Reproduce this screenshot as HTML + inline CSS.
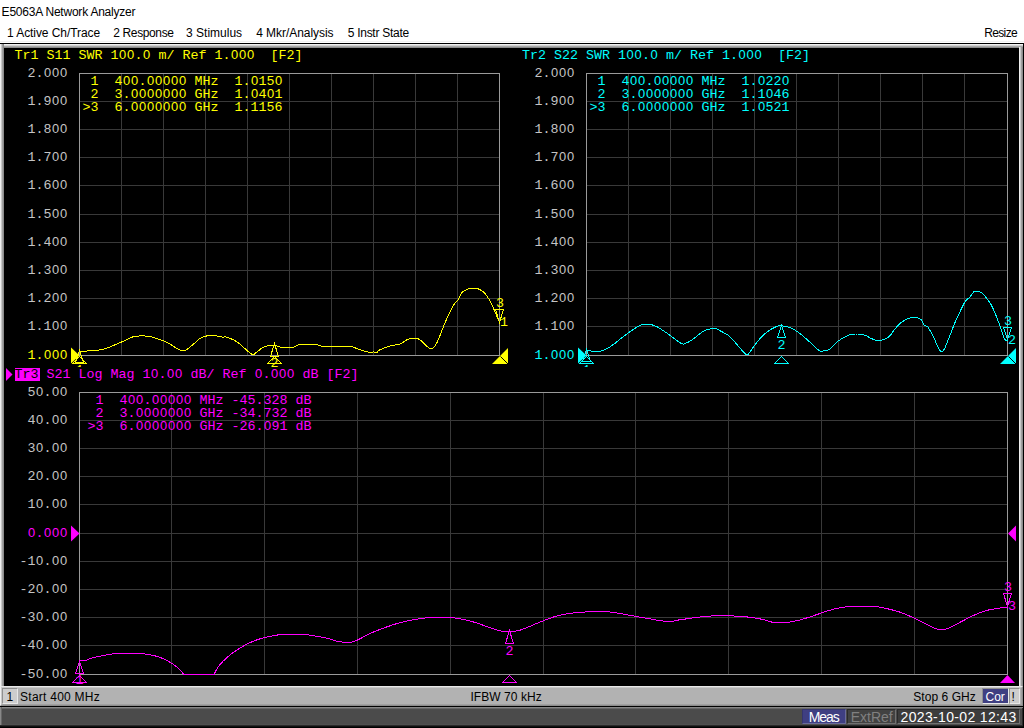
<!DOCTYPE html>
<html lang="en">
<head>
<meta charset="utf-8">
<title>E5063A Network Analyzer</title>
<style>
html,body{margin:0;padding:0;}
body{width:1024px;height:728px;overflow:hidden;background:#fff;position:relative;font-family:"Liberation Sans","DejaVu Sans",sans-serif;color:#000;}
.abs{position:absolute;}
.t{position:absolute;white-space:pre;font-size:12px;}
#titlebar{left:0;top:0;width:1024px;height:22px;background:#fff;}
#menubar{left:0;top:22px;width:1024px;height:21px;background:linear-gradient(#fff 0,#fff 19px,#f2f2f2 19px,#f2f2f2 20px,#fff 20px);}
#edge{left:0;top:43px;width:1024px;height:685px;background:#000;}
#frame{left:0;top:44px;width:1023px;height:642px;background:#000;box-sizing:border-box;}
#frame i{position:absolute;display:block;}
#frame .ft{left:0;top:0;width:1023px;height:4px;background:linear-gradient(#f0f0f0 0,#f0f0f0 1px,#d0d0d0 1px,#d0d0d0 2px,#a8a8a8 2px,#a8a8a8 3px,#8c8c8c 3px,#8c8c8c 4px);}
#frame .fl{left:0;top:0;width:4px;height:642px;background:linear-gradient(90deg,#f0f0f0 0,#f0f0f0 1px,#c8c8c8 1px,#c8c8c8 2px,#a0a0a0 2px,#a0a0a0 3px,#8c8c8c 3px,#8c8c8c 4px);}
#frame .fr{left:1019px;top:3px;width:4px;height:639px;background:linear-gradient(90deg,#f0f0f0 0,#f0f0f0 1px,#c8c8c8 1px,#c8c8c8 2px,#a0a0a0 2px,#a0a0a0 3px,#8c8c8c 3px,#8c8c8c 4px);}
#statusbar{left:0;top:686px;width:1023px;height:20px;background:#b2b2b2;box-sizing:border-box;border-style:solid;border-width:1px;border-color:#e8e8e8 #8c8c8c #8c8c8c #f0f0f0;}
#statusbar .in{position:absolute;left:0;top:0;width:1021px;height:18px;box-sizing:border-box;border-style:solid;border-width:1px;border-color:#c8c8c8 #a0a0a0 #a0a0a0 #c8c8c8;}
#statusbar .box{position:absolute;top:1px;height:16px;box-sizing:border-box;border:1px solid;border-color:#909090 #e8e8e8 #e8e8e8 #909090;background:#cdcdcd;}
#statusbar .t{top:3px;}
#bottombar{left:0;top:707px;width:1023px;height:21px;background:linear-gradient(#868686 0,#868686 1px,#666 1px,#666 2px,#4b4b4b 2px,#4b4b4b 17px,#4f4f4f 17px,#4f4f4f 18px,#2a2a2a 18px,#2a2a2a 19px,#101010 19px,#101010 20px,#000 20px);}
#bottombar .le{position:absolute;left:0;top:0;width:2px;height:18px;background:linear-gradient(90deg,#888 0,#888 1px,#666 1px,#666 2px);}
#bottombar .re{position:absolute;left:1022px;top:1px;width:1px;height:18px;background:#2a2a2a;}
#bottombar .box{position:absolute;top:2px;height:15px;box-sizing:border-box;border:1px solid;border-color:#2a2a2a #707070 #707070 #2a2a2a;}
#bottombar .t{top:2px;font-size:14px;}
#screen text{white-space:pre;}
#screen .z{font-family:"Liberation Sans","DejaVu Sans",sans-serif;font-size:12.9px;}
</style>
</head>
<body>
<div id="titlebar" class="abs"><span class="t" style="left:1.6px;top:5px;letter-spacing:-0.218px">E5063A Network Analyzer</span></div>
<div id="menubar" class="abs">
<span class="t" style="left:7px;top:4px;letter-spacing:-0.069px">1 Active Ch/Trace</span>
<span class="t" style="left:113.3px;top:4px;letter-spacing:-0.378px">2 Response</span>
<span class="t" style="left:186px;top:4px;letter-spacing:0.011px">3 Stimulus</span>
<span class="t" style="left:256.2px;top:4px;letter-spacing:-0.054px">4 Mkr/Analysis</span>
<span class="t" style="left:347.7px;top:4px;letter-spacing:-0.267px">5 Instr State</span>
<span class="t" style="left:984.2px;top:4px;letter-spacing:-0.64px">Resize</span>
</div>
<div id="edge" class="abs"></div>
<div id="frame" class="abs"><i class="ft"></i><i class="fl"></i><i class="fr"></i></div>
<svg id="screen" width="1024" height="728" viewBox="0 0 1024 728" font-family="'Liberation Mono', 'DejaVu Sans Mono', monospace" font-size="13.33" style="position:absolute;left:0;top:0;white-space:pre">
<rect x="4" y="48" width="1015" height="638" fill="#000"/>
<defs><clipPath id="c1"><rect x="4" y="48" width="1015" height="319"/></clipPath></defs>
<g id="trace1">
<path d="M121.5 73.5V355.5M163.5 73.5V355.5M205.5 73.5V355.5M247.5 73.5V355.5M289.5 73.5V355.5M331.5 73.5V355.5M373.5 73.5V355.5M415.5 73.5V355.5M457.5 73.5V355.5M79.5 101.5H499.5M79.5 129.5H499.5M79.5 157.5H499.5M79.5 185.5H499.5M79.5 214.5H499.5M79.5 242.5H499.5M79.5 270.5H499.5M79.5 298.5H499.5M79.5 326.5H499.5" stroke="#393939" stroke-width="1" fill="none" shape-rendering="crispEdges"/>
<rect x="79.5" y="73.5" width="420" height="282" stroke="#9a9a9a" stroke-width="1" fill="none" shape-rendering="crispEdges"/>
<text xml:space="preserve" x="14.5 22.5 30.5 38.5 46.5 54.5 62.5 70.5 78.5 86.5 94.5 102.5 110.5 118.91 126.91 134.5 142.91 150.5 158.5 166.5 174.5 182.5 190.5 198.5 206.5 214.5 222.5 230.91 238.91 246.91 254.5 262.5 270.5 278.5 286.5 294.5" y="59.00" fill="#ffff00" >Tr1 S11 SWR 1<tspan class="z">00</tspan>.<tspan class="z">0</tspan> m/ Ref 1.<tspan class="z">000</tspan>  [F2]</text>
<text xml:space="preserve" x="27.5 35.5 43.91 51.91 59.91" y="77.00" fill="#c4c4c4" >2.<tspan class="z">000</tspan></text>
<text xml:space="preserve" x="27.5 35.5 43.5 51.91 59.91" y="105.00" fill="#c4c4c4" >1.9<tspan class="z">00</tspan></text>
<text xml:space="preserve" x="27.5 35.5 43.5 51.91 59.91" y="133.00" fill="#c4c4c4" >1.8<tspan class="z">00</tspan></text>
<text xml:space="preserve" x="27.5 35.5 43.5 51.91 59.91" y="161.00" fill="#c4c4c4" >1.7<tspan class="z">00</tspan></text>
<text xml:space="preserve" x="27.5 35.5 43.5 51.91 59.91" y="189.00" fill="#c4c4c4" >1.6<tspan class="z">00</tspan></text>
<text xml:space="preserve" x="27.5 35.5 43.5 51.91 59.91" y="218.00" fill="#c4c4c4" >1.5<tspan class="z">00</tspan></text>
<text xml:space="preserve" x="27.5 35.5 43.5 51.91 59.91" y="246.00" fill="#c4c4c4" >1.4<tspan class="z">00</tspan></text>
<text xml:space="preserve" x="27.5 35.5 43.5 51.91 59.91" y="274.00" fill="#c4c4c4" >1.3<tspan class="z">00</tspan></text>
<text xml:space="preserve" x="27.5 35.5 43.5 51.91 59.91" y="302.00" fill="#c4c4c4" >1.2<tspan class="z">00</tspan></text>
<text xml:space="preserve" x="27.5 35.5 43.5 51.91 59.91" y="330.00" fill="#c4c4c4" >1.1<tspan class="z">00</tspan></text>
<text xml:space="preserve" x="27.5 35.5 43.91 51.91 59.91" y="359.00" fill="#ffff00" >1.<tspan class="z">000</tspan></text>
<text xml:space="preserve" x="82.5 90.5 98.5 106.5 114.5 122.91 130.91 138.5 146.91 154.91 162.91 170.91 178.91 186.5 194.5 202.5 210.5 218.5 226.5 234.5 242.5 250.91 258.5 266.5 274.91" y="85.00" fill="#ffff00" > 1  4<tspan class="z">00</tspan>.<tspan class="z">00000</tspan> MHz  1.<tspan class="z">0</tspan>15<tspan class="z">0</tspan></text>
<text xml:space="preserve" x="82.5 90.5 98.5 106.5 114.5 122.5 130.91 138.91 146.91 154.91 162.91 170.91 178.91 186.5 194.5 202.5 210.5 218.5 226.5 234.5 242.5 250.91 258.5 266.91 274.5" y="98.00" fill="#ffff00" > 2  3.<tspan class="z">0000000</tspan> GHz  1.<tspan class="z">0</tspan>4<tspan class="z">0</tspan>1</text>
<text xml:space="preserve" x="82.5 90.5 98.5 106.5 114.5 122.5 130.91 138.91 146.91 154.91 162.91 170.91 178.91 186.5 194.5 202.5 210.5 218.5 226.5 234.5 242.5 250.5 258.5 266.5 274.5" y="111.00" fill="#ffff00" >&gt;3  6.<tspan class="z">0000000</tspan> GHz  1.1156</text>
<polyline points="79.5,351.4 80.8,351.3 82.7,351.3 84.9,351.2 87.3,351.0 89.5,350.9 91.3,350.8 93.2,350.6 95.1,350.5 97.0,350.3 98.8,350.1 100.5,349.8 102.5,349.4 104.3,348.9 106.0,348.3 108.3,347.5 109.9,346.9 111.7,346.2 113.7,345.4 115.7,344.5 117.7,343.7 119.7,342.8 121.6,342.0 123.4,341.2 125.2,340.3 126.9,339.4 128.6,338.6 130.4,337.8 132.1,337.1 134.0,336.6 135.7,336.3 137.5,336.1 139.4,336.0 141.2,335.9 143.1,335.9 144.9,336.0 146.6,336.1 148.1,336.2 150.3,336.6 152.2,337.0 153.9,337.6 155.6,338.2 157.5,338.9 159.2,339.5 160.8,340.0 162.6,340.6 164.3,341.3 166.0,342.0 167.7,342.8 169.4,343.8 171.2,344.9 173.0,346.0 174.8,347.2 176.4,348.2 177.8,349.0 180.1,350.0 181.8,350.4 183.3,350.6 184.7,350.7 186.4,349.8 187.8,348.8 189.6,347.4 191.5,345.8 193.3,344.2 195.0,342.8 196.6,341.4 198.0,340.0 199.5,338.8 201.2,337.8 202.7,337.2 204.3,336.6 206.1,336.1 207.9,335.7 209.7,335.4 211.4,335.3 213.2,335.4 215.0,335.6 216.8,336.0 218.6,336.4 220.2,336.7 221.6,337.0 223.6,337.0 225.0,336.9 227.0,337.3 228.4,337.8 230.0,338.4 231.8,339.1 233.6,339.9 235.4,340.9 237.2,342.0 239.0,343.4 241.0,345.0 243.0,346.8 244.9,348.6 246.6,350.1 248.1,351.4 250.3,353.1 251.9,354.2 253.3,354.5 254.7,354.0 255.9,352.8 257.5,351.4 259.0,350.3 260.7,348.9 262.5,347.7 264.5,346.7 266.2,346.1 268.1,345.7 270.1,345.4 272.0,345.2 273.9,345.2 275.6,345.5 277.3,346.0 278.9,346.6 280.6,347.1 282.5,347.5 284.2,347.6 286.1,347.7 288.0,347.7 290.0,347.6 291.8,347.4 293.4,347.2 295.3,346.6 296.7,345.8 298.3,345.0 300.5,344.4 302.0,344.3 303.8,344.2 305.8,344.1 307.8,344.1 309.9,344.1 311.9,344.2 313.7,344.3 315.3,344.4 317.2,344.7 318.4,345.1 319.6,345.6 321.3,346.0 323.9,346.2 325.3,346.3 326.9,346.3 328.7,346.3 330.7,346.3 332.7,346.3 334.9,346.2 337.0,346.2 339.2,346.2 341.2,346.1 343.2,346.1 345.0,346.1 346.7,346.2 348.1,346.2 350.9,346.6 352.9,347.0 354.3,347.6 355.8,348.1 357.5,348.8 359.3,349.3 361.2,350.0 363.2,350.7 365.1,351.3 366.9,351.8 368.4,352.2 370.7,352.3 372.4,352.1 373.9,351.9 375.7,352.3 377.0,352.5 378.6,350.5 380.0,349.8 381.8,349.0 384.0,348.1 386.2,347.2 388.4,346.4 390.3,345.8 392.4,345.3 394.3,345.1 396.2,344.9 398.0,344.7 399.7,344.2 401.8,343.2 403.7,341.8 405.6,340.5 407.5,339.5 409.5,338.9 411.6,338.5 413.6,338.3 415.3,338.3 416.9,338.3 418.1,338.7 420.0,339.8 421.4,341.0 423.2,342.7 425.1,344.5 427.0,346.3 428.7,347.8 430.2,348.6 432.4,348.6 434.0,347.1 435.6,345.0 437.2,342.3 438.6,338.8 440.3,334.8 441.7,331.2 443.3,327.2 444.9,323.1 446.6,319.2 448.4,315.4 450.2,311.6 452.0,308.1 453.6,305.2 455.4,302.8 456.9,301.4 458.3,299.7 460.1,295.9 462.2,292.3 463.7,291.1 465.5,290.1 467.3,289.3 469.2,288.8 471.1,288.3 473.0,288.0 475.0,288.0 477.0,288.4 478.7,289.1 480.5,290.0 482.2,291.1 484.0,292.5 485.6,294.2 487.5,296.8 489.3,299.8 491.0,303.2 492.7,306.7 494.6,310.8 496.5,315.4 498.3,319.6 499.5,322.5" fill="none" stroke="#ffff00" stroke-width="1" shape-rendering="crispEdges"/>
<polygon points="71,347.5 79.5,355.5 71,363.5" fill="#ffff00"/>
<polygon points="492,364 508,348 508,364" fill="#ffff00"/>
<path d="M500.5 356.5L508 364" stroke="#000" stroke-width="1" fill="none"/>
<g fill="none" stroke="#ffff00" stroke-width="1" shape-rendering="crispEdges">
<path d="M79.5 350.5L75.5 362.5H83.5Z"/>
<path d="M79.5 356.5L72.5 363.5H86.5Z"/>
<path d="M274.5 343.5L270.5 356.5H278.5Z"/>
<path d="M274.5 356.5L267.5 363.5H281.5Z"/>
<path d="M495.5 309.5H503.5L499.5 322.5Z"/>
</g>
<g clip-path="url(#c1)">
<text xml:space="preserve" x="75.50" y="374.00" fill="#ffff00" >1</text>
</g>
<text xml:space="preserve" x="270.50" y="367.00" fill="#ffff00" >2</text>
<text xml:space="preserve" x="496.00" y="307.00" fill="#ffff00" >3</text>
<text xml:space="preserve" x="500.00" y="326.00" fill="#ffff00" >1</text>
</g>
<g id="trace2">
<path d="M628.5 73.5V355.5M670.5 73.5V355.5M712.5 73.5V355.5M754.5 73.5V355.5M796.5 73.5V355.5M838.5 73.5V355.5M880.5 73.5V355.5M922.5 73.5V355.5M964.5 73.5V355.5M586.5 101.5H1007.5M586.5 129.5H1007.5M586.5 157.5H1007.5M586.5 185.5H1007.5M586.5 214.5H1007.5M586.5 242.5H1007.5M586.5 270.5H1007.5M586.5 298.5H1007.5M586.5 326.5H1007.5" stroke="#393939" stroke-width="1" fill="none" shape-rendering="crispEdges"/>
<rect x="586.5" y="73.5" width="421" height="282" stroke="#9a9a9a" stroke-width="1" fill="none" shape-rendering="crispEdges"/>
<text xml:space="preserve" x="522 530 538 546 554 562 570 578 586 594 602 610 618 626.41 634.41 642 650.41 658 666 674 682 690 698 706 714 722 730 738.41 746.41 754.41 762 770 778 786 794 802" y="59.00" fill="#00ffff" >Tr2 S22 SWR 1<tspan class="z">00</tspan>.<tspan class="z">0</tspan> m/ Ref 1.<tspan class="z">000</tspan>  [F2]</text>
<text xml:space="preserve" x="534.5 542.5 550.91 558.91 566.91" y="77.00" fill="#c4c4c4" >2.<tspan class="z">000</tspan></text>
<text xml:space="preserve" x="534.5 542.5 550.5 558.91 566.91" y="105.00" fill="#c4c4c4" >1.9<tspan class="z">00</tspan></text>
<text xml:space="preserve" x="534.5 542.5 550.5 558.91 566.91" y="133.00" fill="#c4c4c4" >1.8<tspan class="z">00</tspan></text>
<text xml:space="preserve" x="534.5 542.5 550.5 558.91 566.91" y="161.00" fill="#c4c4c4" >1.7<tspan class="z">00</tspan></text>
<text xml:space="preserve" x="534.5 542.5 550.5 558.91 566.91" y="189.00" fill="#c4c4c4" >1.6<tspan class="z">00</tspan></text>
<text xml:space="preserve" x="534.5 542.5 550.5 558.91 566.91" y="218.00" fill="#c4c4c4" >1.5<tspan class="z">00</tspan></text>
<text xml:space="preserve" x="534.5 542.5 550.5 558.91 566.91" y="246.00" fill="#c4c4c4" >1.4<tspan class="z">00</tspan></text>
<text xml:space="preserve" x="534.5 542.5 550.5 558.91 566.91" y="274.00" fill="#c4c4c4" >1.3<tspan class="z">00</tspan></text>
<text xml:space="preserve" x="534.5 542.5 550.5 558.91 566.91" y="302.00" fill="#c4c4c4" >1.2<tspan class="z">00</tspan></text>
<text xml:space="preserve" x="534.5 542.5 550.5 558.91 566.91" y="330.00" fill="#c4c4c4" >1.1<tspan class="z">00</tspan></text>
<text xml:space="preserve" x="534.5 542.5 550.91 558.91 566.91" y="359.00" fill="#00ffff" >1.<tspan class="z">000</tspan></text>
<text xml:space="preserve" x="589.5 597.5 605.5 613.5 621.5 629.91 637.91 645.5 653.91 661.91 669.91 677.91 685.91 693.5 701.5 709.5 717.5 725.5 733.5 741.5 749.5 757.91 765.5 773.5 781.91" y="85.00" fill="#00ffff" > 1  4<tspan class="z">00</tspan>.<tspan class="z">00000</tspan> MHz  1.<tspan class="z">0</tspan>22<tspan class="z">0</tspan></text>
<text xml:space="preserve" x="589.5 597.5 605.5 613.5 621.5 629.5 637.91 645.91 653.91 661.91 669.91 677.91 685.91 693.5 701.5 709.5 717.5 725.5 733.5 741.5 749.5 757.5 765.91 773.5 781.5" y="98.00" fill="#00ffff" > 2  3.<tspan class="z">0000000</tspan> GHz  1.1<tspan class="z">0</tspan>46</text>
<text xml:space="preserve" x="589.5 597.5 605.5 613.5 621.5 629.5 637.91 645.91 653.91 661.91 669.91 677.91 685.91 693.5 701.5 709.5 717.5 725.5 733.5 741.5 749.5 757.91 765.5 773.5 781.5" y="111.00" fill="#00ffff" >&gt;3  6.<tspan class="z">0000000</tspan> GHz  1.<tspan class="z">0</tspan>521</text>
<polyline points="586.5,350.2 587.9,350.5 589.9,350.9 592.2,351.2 593.9,351.4 595.8,351.6 597.8,351.6 600.0,351.2 601.6,350.8 603.3,350.2 605.1,349.4 606.9,348.5 608.9,347.5 610.9,346.2 612.5,345.1 614.2,343.9 616.0,342.5 617.8,341.0 619.7,339.5 621.5,338.0 623.3,336.6 625.0,335.3 626.9,333.9 628.9,332.5 630.8,331.1 632.7,329.8 634.4,328.6 636.1,327.6 637.5,326.7 639.5,325.6 641.0,325.0 642.3,324.7 643.8,324.4 645.3,324.2 646.8,324.1 648.3,324.1 650.0,324.4 651.8,324.8 653.6,325.3 655.6,326.1 657.8,327.2 659.4,328.1 661.2,329.2 663.0,330.5 664.9,331.8 666.8,333.1 668.8,334.5 670.5,335.8 672.5,337.2 674.4,338.7 676.4,340.1 678.3,341.5 679.9,342.6 681.2,343.4 683.6,344.1 685.2,343.4 686.4,343.0 687.8,342.4 689.4,341.6 691.4,340.3 692.9,339.2 694.7,337.9 696.7,336.3 698.7,334.7 700.7,333.2 702.4,331.9 703.9,330.9 706.3,329.7 707.8,329.3 709.4,329.1 711.2,328.6 713.0,328.3 714.8,328.3 716.5,328.8 718.3,329.8 720.3,330.9 722.1,331.8 724.1,332.9 726.2,334.0 728.1,335.3 729.7,336.6 731.0,337.9 732.5,339.5 734.4,341.6 736.1,343.5 738.2,346.0 740.4,348.6 742.6,351.0 744.5,353.1 746.1,354.4 748.4,354.4 750.0,351.7 751.3,350.0 752.8,347.8 754.5,345.4 756.2,343.1 757.8,341.2 759.4,339.3 761.2,337.3 762.9,335.5 764.8,333.8 766.5,332.4 768.2,331.2 770.0,330.0 771.8,328.9 773.5,328.0 775.0,327.2 776.8,326.4 778.2,326.0 779.6,325.9 781.2,325.9 782.8,326.0 784.6,326.2 786.4,326.6 788.1,327.0 789.8,327.5 791.6,328.2 793.3,329.1 795.0,330.1 796.9,331.4 798.6,332.6 800.3,333.9 802.2,335.3 804.1,337.0 806.2,338.8 807.9,340.3 809.8,342.0 811.8,343.9 813.8,345.8 815.7,347.6 817.3,349.1 818.8,350.2 820.8,351.3 822.0,351.2 823.4,350.9 824.8,350.8 826.4,350.5 828.0,350.0 829.7,349.1 831.4,347.6 833.2,345.7 835.2,343.6 837.5,341.6 839.0,340.5 840.7,339.4 842.5,338.3 844.4,337.2 846.3,336.2 848.2,335.4 850.0,334.8 851.8,334.4 853.7,334.1 855.5,334.0 857.4,334.0 859.2,334.1 860.9,334.2 862.5,334.5 864.6,335.1 866.7,336.0 868.6,337.0 870.3,338.0 871.9,338.8 873.9,339.6 875.5,340.1 877.3,340.3 879.1,340.3 881.2,340.1 883.2,339.7 885.0,339.2 887.0,338.2 888.7,336.9 890.3,335.4 892.1,333.0 894.0,330.2 895.8,328.0 897.8,325.6 900.0,323.4 901.8,322.0 903.7,320.8 905.7,319.8 907.6,318.9 909.5,318.2 911.5,317.7 913.3,317.4 915.1,317.4 917.3,317.7 919.4,318.5 921.1,319.6 922.7,322.2 924.1,324.9 925.9,325.8 927.9,327.1 929.4,329.4 931.2,332.4 933.2,336.2 934.7,339.4 936.3,343.4 938.1,347.4 939.8,350.5 941.4,352.0 943.2,351.1 944.9,348.0 946.5,343.9 948.2,339.9 949.8,336.0 951.4,331.8 953.1,327.3 955.0,322.6 956.8,318.5 958.9,314.0 961.0,309.5 963.0,305.4 964.7,302.3 966.8,299.5 968.5,298.3 970.0,297.1 971.8,294.1 973.8,291.8 975.5,291.4 977.4,291.5 979.4,291.8 981.3,292.6 983.4,294.3 985.4,296.7 987.3,299.3 989.1,301.6 990.8,304.2 992.6,307.6 994.2,311.2 996.0,315.4 997.7,319.9 999.3,324.1 1001.3,329.8 1003.1,335.3 1004.6,339.2 1006.4,340.6 1007.5,340.2" fill="none" stroke="#00ffff" stroke-width="1" shape-rendering="crispEdges"/>
<polygon points="578,347.5 586.5,355.5 578,363.5" fill="#00ffff"/>
<polygon points="1000,364 1016,348 1016,364" fill="#00ffff"/>
<path d="M1008.5 356.5L1016 364" stroke="#000" stroke-width="1" fill="none"/>
<g fill="none" stroke="#00ffff" stroke-width="1" shape-rendering="crispEdges">
<path d="M586.5 349.5L582.5 361.5H590.5Z"/>
<path d="M586.5 356.5L579.5 363.5H593.5Z"/>
<path d="M781.5 325.5L777.5 337.5H785.5Z"/>
<path d="M781.5 356.5L774.5 363.5H788.5Z"/>
<path d="M1003.5 327.5H1011.5L1007.5 339.5Z"/>
</g>
<g clip-path="url(#c1)">
<text xml:space="preserve" x="582.50" y="373.50" fill="#00ffff" >1</text>
</g>
<text xml:space="preserve" x="777.50" y="349.00" fill="#00ffff" >2</text>
<text xml:space="preserve" x="1004.00" y="325.00" fill="#00ffff" >3</text>
<text xml:space="preserve" x="1008.00" y="344.00" fill="#00ffff" >2</text>
</g>
<g id="trace3">
<path d="M171.5 392.5V674.5M264.5 392.5V674.5M357.5 392.5V674.5M450.5 392.5V674.5M543.5 392.5V674.5M635.5 392.5V674.5M728.5 392.5V674.5M821.5 392.5V674.5M914.5 392.5V674.5M79.5 420.5H1007.5M79.5 448.5H1007.5M79.5 476.5H1007.5M79.5 504.5H1007.5M79.5 533.5H1007.5M79.5 561.5H1007.5M79.5 589.5H1007.5M79.5 617.5H1007.5M79.5 645.5H1007.5" stroke="#393939" stroke-width="1" fill="none" shape-rendering="crispEdges"/>
<rect x="79.5" y="392.5" width="928" height="282" stroke="#9a9a9a" stroke-width="1" fill="none" shape-rendering="crispEdges"/>
<polygon points="6,368 12.5,374.5 6,381" fill="#ff00ff"/>
<rect x="15" y="368" width="25" height="13" fill="#ff00ff"/>
<text xml:space="preserve" x="14.5 22.5 30.5 38.5 46.5 54.5 62.5 70.5 78.5 86.5 94.5 102.5 110.5 118.5 126.5 134.5 142.5 150.91 158.5 166.91 174.91 182.5 190.5 198.5 206.5 214.5 222.5 230.5 238.5 246.5 254.91 262.5 270.91 278.91 286.91 294.5 302.5 310.5 318.5 326.5 334.5 342.5 350.5" y="378.00" fill="#ff00ff" ><tspan fill="#000">Tr3</tspan> S21 Log Mag 1<tspan class="z">0</tspan>.<tspan class="z">00</tspan> dB/ Ref <tspan class="z">0</tspan>.<tspan class="z">000</tspan> dB [F2]</text>
<text xml:space="preserve" x="27.5 35.91 43.5 51.91 59.91" y="396.00" fill="#c4c4c4" >5<tspan class="z">0</tspan>.<tspan class="z">00</tspan></text>
<text xml:space="preserve" x="27.5 35.91 43.5 51.91 59.91" y="424.00" fill="#c4c4c4" >4<tspan class="z">0</tspan>.<tspan class="z">00</tspan></text>
<text xml:space="preserve" x="27.5 35.91 43.5 51.91 59.91" y="452.00" fill="#c4c4c4" >3<tspan class="z">0</tspan>.<tspan class="z">00</tspan></text>
<text xml:space="preserve" x="27.5 35.91 43.5 51.91 59.91" y="480.00" fill="#c4c4c4" >2<tspan class="z">0</tspan>.<tspan class="z">00</tspan></text>
<text xml:space="preserve" x="27.5 35.91 43.5 51.91 59.91" y="508.00" fill="#c4c4c4" >1<tspan class="z">0</tspan>.<tspan class="z">00</tspan></text>
<text xml:space="preserve" x="27.91 35.5 43.91 51.91 59.91" y="537.00" fill="#ff00ff" ><tspan class="z">0</tspan>.<tspan class="z">000</tspan></text>
<text xml:space="preserve" x="19.5 27.5 35.91 43.5 51.91 59.91" y="565.00" fill="#c4c4c4" >-1<tspan class="z">0</tspan>.<tspan class="z">00</tspan></text>
<text xml:space="preserve" x="19.5 27.5 35.91 43.5 51.91 59.91" y="593.00" fill="#c4c4c4" >-2<tspan class="z">0</tspan>.<tspan class="z">00</tspan></text>
<text xml:space="preserve" x="19.5 27.5 35.91 43.5 51.91 59.91" y="621.00" fill="#c4c4c4" >-3<tspan class="z">0</tspan>.<tspan class="z">00</tspan></text>
<text xml:space="preserve" x="19.5 27.5 35.91 43.5 51.91 59.91" y="649.00" fill="#c4c4c4" >-4<tspan class="z">0</tspan>.<tspan class="z">00</tspan></text>
<text xml:space="preserve" x="19.5 27.5 35.91 43.5 51.91 59.91" y="678.00" fill="#c4c4c4" >-5<tspan class="z">0</tspan>.<tspan class="z">00</tspan></text>
<text xml:space="preserve" x="87.5 95.5 103.5 111.5 119.5 127.91 135.91 143.5 151.91 159.91 167.91 175.91 183.91 191.5 199.5 207.5 215.5 223.5 231.5 239.5 247.5 255.5 263.5 271.5 279.5 287.5 295.5 303.5" y="404.00" fill="#ff00ff" > 1  4<tspan class="z">00</tspan>.<tspan class="z">00000</tspan> MHz -45.328 dB</text>
<text xml:space="preserve" x="87.5 95.5 103.5 111.5 119.5 127.5 135.91 143.91 151.91 159.91 167.91 175.91 183.91 191.5 199.5 207.5 215.5 223.5 231.5 239.5 247.5 255.5 263.5 271.5 279.5 287.5 295.5 303.5" y="417.00" fill="#ff00ff" > 2  3.<tspan class="z">0000000</tspan> GHz -34.732 dB</text>
<text xml:space="preserve" x="87.5 95.5 103.5 111.5 119.5 127.5 135.91 143.91 151.91 159.91 167.91 175.91 183.91 191.5 199.5 207.5 215.5 223.5 231.5 239.5 247.5 255.5 263.91 271.5 279.5 287.5 295.5 303.5" y="430.00" fill="#ff00ff" >&gt;3  6.<tspan class="z">0000000</tspan> GHz -26.<tspan class="z">0</tspan>91 dB</text>
<polyline points="79.5,660.6 81.2,660.6 83.7,660.5 86.0,660.3 88.6,659.3 91.4,658.2 94.0,657.6 96.9,656.9 100.0,656.3 102.4,655.8 104.8,655.2 107.3,654.6 110.0,654.2 112.8,653.9 115.6,653.7 118.6,653.5 122.0,653.4 124.5,653.3 127.2,653.3 130.1,653.3 133.0,653.3 135.9,653.4 138.6,653.5 141.2,653.7 143.9,653.9 146.4,654.2 149.0,654.6 151.4,655.0 153.8,655.5 156.5,656.3 159.2,657.1 161.7,658.1 164.2,659.2 166.5,660.3 169.3,661.8 171.9,663.4 174.4,665.2 176.7,666.9 179.6,669.6 182.1,672.4 183.8,674.3" fill="none" stroke="#ff00ff" stroke-width="1" shape-rendering="crispEdges"/>
<path d="M183.5 674.5H214.5" stroke="#ff00ff" stroke-width="1" shape-rendering="crispEdges"/>
<polyline points="214.2,674.3 215.8,670.9 218.6,666.2 220.6,663.8 223.1,661.2 225.8,658.6 228.7,656.0 231.2,654.0 234.0,652.0 236.8,650.0 239.8,648.1 242.7,646.4 245.2,645.1 247.7,643.8 250.2,642.6 252.8,641.5 255.4,640.4 257.9,639.5 260.5,638.7 263.1,637.9 265.7,637.2 268.2,636.7 270.7,636.2 273.1,635.7 275.7,635.3 278.2,634.9 280.6,634.7 283.1,634.5 285.8,634.4 288.4,634.3 291.1,634.2 294.0,634.2 296.9,634.2 299.7,634.3 302.4,634.4 305.4,634.6 308.2,634.9 310.9,635.3 313.6,635.7 316.3,636.2 319.2,636.7 322.2,637.3 325.1,637.9 327.8,638.5 330.0,639.0 332.7,640.0 335.2,640.8 337.3,641.2 339.9,641.7 342.7,642.2 345.5,642.5 347.9,642.6 351.0,642.3 353.6,641.6 356.8,640.3 359.2,639.2 361.9,637.8 364.7,636.3 367.7,634.7 370.8,633.2 373.6,632.0 376.5,630.8 379.6,629.6 382.7,628.4 385.7,627.3 388.6,626.3 391.3,625.4 393.8,624.5 396.2,623.8 398.6,623.1 401.1,622.4 403.8,621.7 406.6,621.1 409.6,620.4 412.7,619.8 415.8,619.3 418.8,618.8 421.6,618.4 424.3,618.1 426.8,617.8 429.2,617.5 431.6,617.4 434.1,617.3 436.8,617.2 439.6,617.2 442.5,617.2 445.5,617.2 448.6,617.4 451.6,617.6 454.6,617.9 457.6,618.3 460.6,618.9 463.7,619.5 466.7,620.2 469.6,621.0 472.4,621.7 475.1,622.5 477.7,623.3 480.2,624.2 482.7,625.1 485.2,626.0 487.6,626.8 490.5,627.8 493.3,628.8 496.1,629.7 498.8,630.5 501.6,631.1 504.4,631.4 507.3,631.6 510.2,631.5 513.0,631.4 515.5,631.1 518.2,630.6 520.5,630.0 522.9,629.2 525.7,628.1 527.9,627.2 530.4,626.2 533.0,625.1 535.6,623.9 538.3,622.8 540.9,621.7 543.5,620.7 546.1,619.7 548.7,618.7 551.3,617.8 553.8,616.9 556.2,616.2 558.9,615.5 561.5,614.9 564.0,614.4 566.5,614.0 568.9,613.6 571.7,613.2 574.2,612.9 577.0,612.7 580.2,612.4 582.8,612.2 585.7,611.9 588.8,611.6 591.9,611.3 595.0,611.2 597.9,611.1 600.6,611.2 603.2,611.3 605.7,611.5 608.2,611.8 610.7,612.1 613.2,612.4 615.7,612.8 618.2,613.1 620.6,613.6 623.1,614.0 625.7,614.5 628.4,615.0 631.2,615.5 634.0,616.0 636.9,616.6 639.9,617.1 643.0,617.7 646.2,618.2 648.8,618.6 651.5,619.1 654.4,619.7 657.2,620.2 660.1,620.6 662.9,621.0 665.4,621.3 667.8,621.5 670.9,621.5 673.5,621.1 675.9,620.6 678.5,620.0 681.7,619.5 684.2,619.2 686.9,618.8 689.9,618.4 692.9,617.9 696.0,617.5 699.0,617.1 701.9,616.8 704.6,616.5 707.8,616.2 710.8,616.0 713.7,615.9 716.5,615.8 719.3,615.7 722.4,615.7 725.2,615.7 728.1,615.8 731.1,615.8 734.0,616.0 737.0,616.1 739.9,616.3 742.7,616.5 745.9,616.8 749.0,617.2 752.0,617.6 754.9,618.0 757.8,618.5 760.5,619.0 763.6,619.7 766.5,620.5 769.2,621.4 771.8,622.1 774.4,622.6 777.4,622.9 780.2,623.0 782.9,622.8 785.8,622.6 788.3,622.3 790.8,621.9 793.4,621.4 795.9,620.9 798.5,620.3 801.0,619.7 803.4,619.0 805.8,618.2 808.4,617.4 811.2,616.5 813.8,615.6 816.7,614.6 819.7,613.6 822.6,612.6 825.4,611.6 828.0,610.8 831.3,609.8 834.2,609.0 837.0,608.4 839.9,607.8 842.7,607.3 845.3,606.9 848.2,606.6 851.9,606.4 854.2,606.3 856.9,606.2 859.7,606.2 862.7,606.2 865.7,606.2 868.7,606.2 871.4,606.3 873.8,606.4 877.1,606.7 879.9,607.1 882.5,607.6 885.0,608.2 887.7,608.8 890.5,609.5 893.3,610.2 896.1,611.0 898.9,611.8 901.7,612.8 904.5,613.9 907.4,615.1 910.2,616.3 912.9,617.6 915.6,618.8 918.8,620.3 921.9,621.8 924.8,623.3 927.6,624.7 930.3,626.0 932.8,627.4 935.2,628.5 937.5,629.3 940.2,629.8 942.8,629.8 945.5,629.3 947.8,628.5 950.1,627.5 952.7,626.1 955.5,624.7 958.0,623.4 960.8,621.9 963.7,620.4 966.6,618.8 969.4,617.4 972.2,616.1 975.1,614.7 977.9,613.5 980.6,612.4 983.3,611.4 986.4,610.5 989.4,609.8 992.3,609.3 995.3,608.8 997.9,608.4 1000.8,607.9 1003.5,607.6 1005.8,607.2 1007.5,607.0" fill="none" stroke="#ff00ff" stroke-width="1" shape-rendering="crispEdges"/>
<polygon points="71,525.5 79.5,533.5 71,541.5" fill="#ff00ff"/>
<polygon points="1016,525.5 1008,533.5 1016,541.5" fill="#ff00ff"/>
<polygon points="1007.5,675 1000,683 1015,683" fill="#ff00ff"/>
<g fill="none" stroke="#ff00ff" stroke-width="1" shape-rendering="crispEdges">
<path d="M79.5 661.5L75.5 673.5H83.5Z"/>
<path d="M79.5 675.5L72.5 682.5H86.5Z"/>
<path d="M509.5 630.5L505.5 643.5H513.5Z"/>
<path d="M509.5 675.5L502.5 682.5H516.5Z"/>
<path d="M1003.5 593.5H1011.5L1007.5 606.5Z"/>
</g>
<text xml:space="preserve" x="505.50" y="655.00" fill="#ff00ff" >2</text>
<text xml:space="preserve" x="75.50" y="684.00" fill="#ff00ff" >1</text>
<text xml:space="preserve" x="1004.00" y="591.00" fill="#ff00ff" >3</text>
<text xml:space="preserve" x="1008.00" y="610.00" fill="#ff00ff" >3</text>
</g>
</svg>
<div id="statusbar" class="abs"><div class="in"></div>
<div class="box" style="left:1px;width:16px"></div><span class="t" style="left:5.5px">1</span>
<span class="t" style="left:19.1px;letter-spacing:0.242px">Start 400 MHz</span>
<span class="t" style="left:469.4px;letter-spacing:0.08px">IFBW 70 kHz</span>
<span class="t" style="left:912.3px;letter-spacing:0.044px">Stop 6 GHz</span>
<div class="box" style="left:981px;width:27px;background:#3f3f82"></div><span class="t" style="left:984.6px;color:#fff;letter-spacing:-0.05px">Cor</span>
<div class="box" style="left:1008px;width:11px"></div><span class="t" style="left:1010.5px">!</span>
</div>
<div id="bottombar" class="abs"><div class="le"></div><div class="re"></div>
<div class="box" style="left:802px;width:44px;background:#3f3f82;border-color:#34346e #6a6a9a #6a6a9a #34346e"></div><span class="t" style="left:808.8px;color:#fff;letter-spacing:-1.1px">Meas</span>
<div class="box" style="left:847px;width:49px;background:#424242"></div><span class="t" style="left:850.7px;color:#808080">ExtRef</span>
<div class="box" style="left:897px;width:123px;background:#3c3c3c"></div><span class="t" style="left:900.6px;color:#fff;letter-spacing:0.34px">2023-10-02 12:43</span>
</div>
</body>
</html>
